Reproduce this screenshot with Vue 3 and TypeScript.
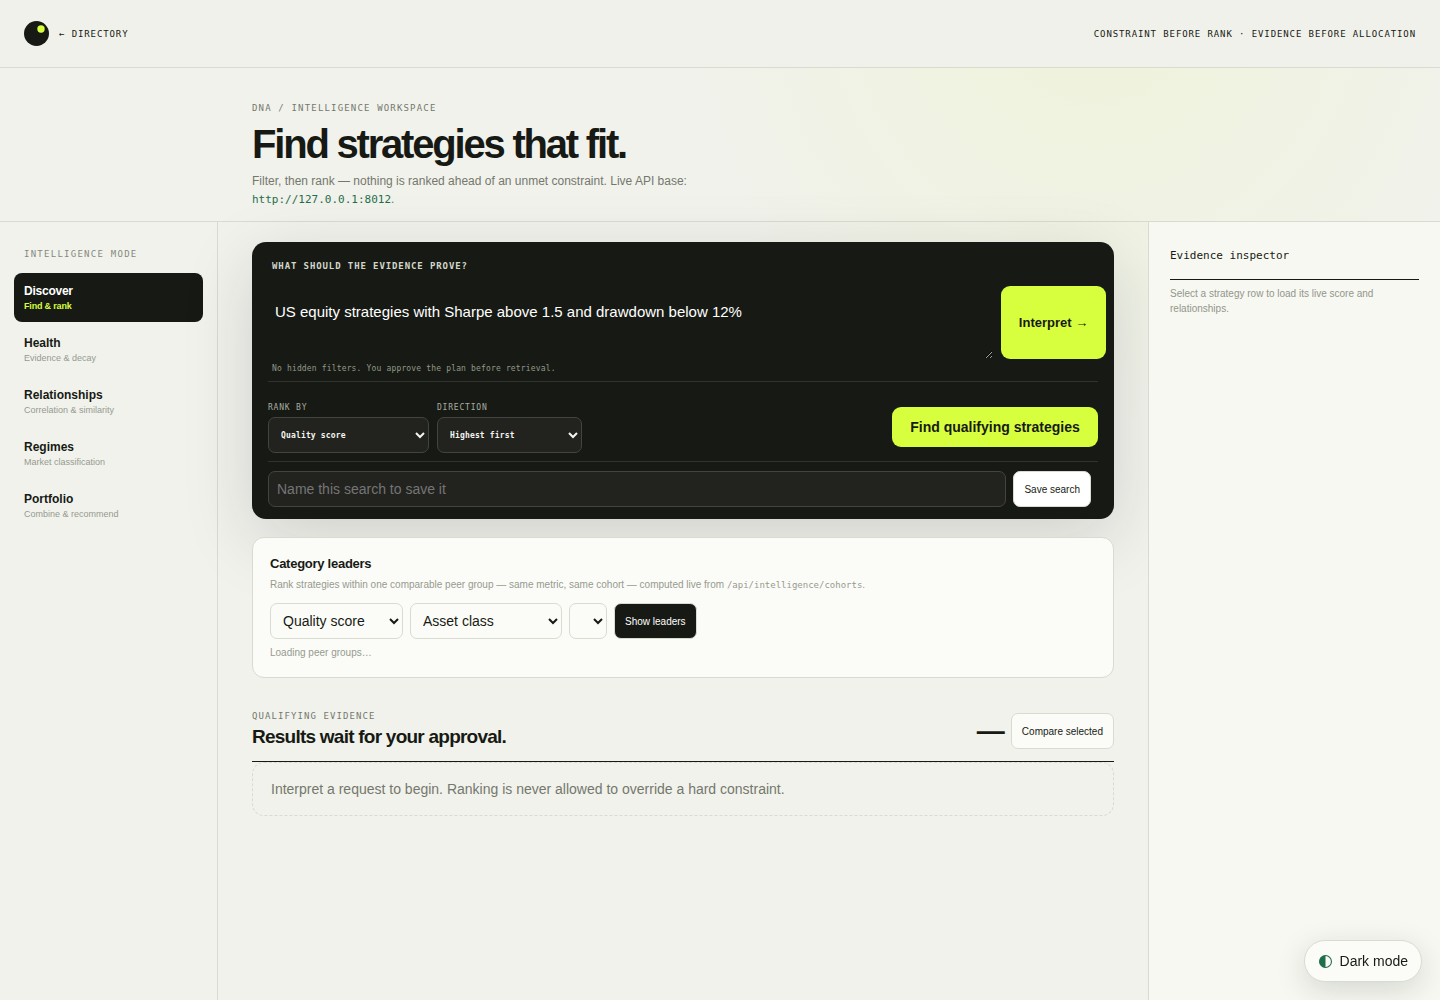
<script setup lang="ts">
import { ref } from 'vue'

interface Mode {
  id: string
  name: string
  detail: string
}

const modes: Mode[] = [
  { id: 'discover', name: 'Discover', detail: 'Find & rank' },
  { id: 'health', name: 'Health', detail: 'Evidence & decay' },
  { id: 'relationships', name: 'Relationships', detail: 'Correlation & similarity' },
  { id: 'regimes', name: 'Regimes', detail: 'Market classification' },
  { id: 'portfolio', name: 'Portfolio', detail: 'Combine & recommend' },
]

const activeMode = ref('discover')
const request = ref('US equity strategies with Sharpe above 1.5 and drawdown below 12%')
const searchName = ref('')
const apiBase = 'http://127.0.0.1:8012'
</script>

<template>
  <div class="page">
    <header class="topbar">
      <a class="brand" href="#directory">
        <svg class="logo" viewBox="0 0 25 25" aria-hidden="true">
          <circle cx="12.5" cy="12.5" r="12.5" fill="#171a14" />
          <circle cx="17" cy="8" r="3.7" fill="#d7ff3e" />
        </svg>
        <span>← DIRECTORY</span>
      </a>
      <span class="motto">CONSTRAINT BEFORE RANK · EVIDENCE BEFORE ALLOCATION</span>
    </header>

    <section class="hero">
      <p class="eyebrow">DNA / INTELLIGENCE WORKSPACE</p>
      <h1>Find strategies that fit.</h1>
      <p class="lede">
        Filter, then rank — nothing is ranked ahead of an unmet constraint. Live API base:
        <code>{{ apiBase }}</code>.
      </p>
    </section>

    <div class="workspace">
      <nav class="modes" aria-label="Intelligence mode">
        <p class="modes-title">INTELLIGENCE MODE</p>
        <button
          v-for="mode in modes"
          :key="mode.id"
          type="button"
          class="mode"
          :class="{ active: mode.id === activeMode }"
          @click="activeMode = mode.id"
        >
          <b>{{ mode.name }}</b>
          <small>{{ mode.detail }}</small>
        </button>
      </nav>

      <main class="main">
        <section class="console">
          <label class="ask" for="request">WHAT SHOULD THE EVIDENCE PROVE?</label>
          <div class="composer">
            <textarea id="request" v-model="request"></textarea>
            <button type="button" class="interpret">Interpret <span>→</span></button>
          </div>
          <p class="note">No hidden filters. You approve the plan before retrieval.</p>

          <div class="rank-row">
            <label class="field rank">
              <span>RANK BY</span>
              <select><option>Quality score</option></select>
            </label>
            <label class="field direction">
              <span>DIRECTION</span>
              <select><option>Highest first</option></select>
            </label>
            <button type="button" class="find">Find qualifying strategies</button>
          </div>

          <div class="save-row">
            <input v-model="searchName" type="text" placeholder="Name this search to save it" aria-label="Search name" />
            <button type="button" class="small-button save">Save search</button>
          </div>
        </section>

        <section class="leaders">
          <h2>Category leaders</h2>
          <p>
            Rank strategies within one comparable peer group — same metric, same cohort — computed live from
            <code>/api/intelligence/cohorts</code>.
          </p>
          <div class="leader-controls">
            <select class="metric" aria-label="Metric"><option>Quality score</option></select>
            <select class="cohort" aria-label="Cohort"><option>Asset class</option></select>
            <select class="peer" aria-label="Peer group"></select>
            <button type="button" class="small-button show">Show leaders</button>
          </div>
          <p>Loading peer groups…</p>
        </section>

        <section class="results">
          <div class="results-head">
            <div>
              <p class="results-eyebrow">QUALIFYING EVIDENCE</p>
              <h2>Results wait for your approval.</h2>
            </div>
            <div class="results-actions">
              <strong>—</strong>
              <button type="button" class="small-button compare">Compare selected</button>
            </div>
          </div>
          <p class="empty">Interpret a request to begin. Ranking is never allowed to override a hard constraint.</p>
        </section>
      </main>

      <aside class="inspector">
        <h2>Evidence inspector</h2>
        <p>Select a strategy row to load its live score and relationships.</p>
      </aside>
    </div>

    <button type="button" class="theme">
      <svg viewBox="0 0 12 12" aria-hidden="true">
        <circle cx="6" cy="6" r="5.5" fill="none" stroke="#1f6f4a" />
        <path d="M6 .5a5.5 5.5 0 0 0 0 11z" fill="#1f6f4a" />
      </svg>
      <span>Dark mode</span>
    </button>
  </div>
</template>

<style>
body {
  margin: 0;
  background: #f1f2ec;
}
</style>

<style scoped>
.page {
  --ink: #171a14;
  --line: #d8dbd0;
  --lime: #d7ff3e;
  --paper: #fbfcf7;
  --mono: "DejaVu Sans Mono", monospace;
  min-height: 100vh;
  display: flex;
  flex-direction: column;
  color: var(--ink);
  background: radial-gradient(circle at 76% 0, rgba(215, 255, 62, 0.1), transparent 430px), #f1f2ec;
  font-family: "Liberation Sans", Arial, sans-serif;
  font-size: 14px;
}

*,
*::before,
*::after {
  box-sizing: border-box;
}

h1,
h2,
p {
  margin: 0;
}

button,
input,
select,
textarea {
  font: inherit;
  margin: 0;
}

code {
  font-family: var(--mono);
}

.topbar {
  display: flex;
  align-items: center;
  justify-content: space-between;
  height: 68px;
  padding: 0 24px;
  border-bottom: 1px solid var(--line);
  background: #f0f1ea;
  font: 9px/14px var(--mono);
  letter-spacing: 0.1em;
}

.brand {
  display: flex;
  align-items: center;
  gap: 10px;
  color: inherit;
  text-decoration: none;
}

.logo {
  width: 25px;
  height: 25px;
}

.hero {
  padding: 33px 34px 12px 252px;
  border-bottom: 1px solid var(--line);
}

.eyebrow {
  color: #74786c;
  font: 9px/14px var(--mono);
  letter-spacing: 0.13em;
}

h1 {
  margin: 9px 0 8px;
  font-size: 40px;
  line-height: 40px;
  letter-spacing: -0.055em;
}

.lede {
  max-width: 520px;
  color: #74786c;
  font-size: 12px;
  line-height: 18px;
}

.lede code {
  color: #1f6f4a;
  font-size: 11px;
}

.workspace {
  flex: 1;
  display: grid;
  grid-template-columns: 218px minmax(0, 1fr) 292px;
}

.modes {
  padding: 25px 14px;
  border-right: 1px solid var(--line);
}

.modes-title {
  padding: 0 10px 12px;
  color: #85897d;
  font: 9px/14px var(--mono);
  letter-spacing: 0.14em;
}

.mode {
  display: block;
  width: 100%;
  height: 49px;
  margin-bottom: 3px;
  padding: 0 10px;
  border: 0;
  border-radius: 8px;
  background: none;
  color: var(--ink);
  text-align: left;
}

.mode b,
.mode small {
  display: block;
}

.mode b {
  font-size: 12px;
  line-height: 16px;
}

.mode small {
  color: #969a8f;
  font-size: 9px;
  line-height: 14px;
}

.mode.active {
  background: var(--ink);
  color: #fff;
}

.mode.active b,
.mode.active small {
  letter-spacing: -0.02em;
}

.mode.active small {
  color: var(--lime);
  font-weight: 700;
}

.main {
  padding: 20px 34px 40px;
}

.console {
  padding: 8px 8px 12px;
  border-radius: 14px;
  background: var(--ink);
  box-shadow: 0 20px 70px rgba(23, 26, 20, 0.15);
}

.ask {
  display: block;
  padding: 9px 12px 13px;
  color: #d3d7ca;
  font: 700 9px/14px var(--mono);
  letter-spacing: 0.1em;
}

.composer {
  display: flex;
  gap: 8px;
}

.composer textarea {
  flex: 1;
  min-width: 0;
  height: 73px;
  padding: 15px;
  border: 0;
  outline: 0;
  background: none;
  color: #fff;
  font-size: 15px;
  line-height: 22px;
  resize: vertical;
}

.interpret,
.find {
  border: 0;
  border-radius: 9px;
  background: var(--lime);
  color: var(--ink);
  font-weight: 700;
}

.interpret {
  width: 105px;
  font-size: 13px;
}

.interpret span {
  font-weight: 400;
}

.note {
  padding: 3px 12px 6px;
  color: #92988a;
  font: 8px/13px var(--mono);
  letter-spacing: 0.02em;
}

.rank-row {
  display: flex;
  gap: 8px;
  margin: 0 8px;
  padding: 19px 0 8px;
  border-top: 1px solid #30332d;
}

.field {
  color: #a8aca0;
  font: 8px/14px var(--mono);
  letter-spacing: 0.1em;
}

.field span,
.field select {
  display: block;
}

.field span {
  margin-bottom: 2px;
}

.field select {
  width: 100%;
  height: 36px;
  padding: 0 8px;
  border: 1px solid #42443f;
  border-radius: 7px;
  background: #22231f;
  color: #f4f5ef;
  font-weight: 700;
  letter-spacing: 0.02em;
}

.rank {
  width: 161px;
}

.direction {
  width: 145px;
}

.find {
  align-self: center;
  height: 40px;
  width: 206px;
  margin-left: auto;
  font-size: 14px;
}

.save-row {
  display: flex;
  gap: 7px;
  margin: 0 8px;
  padding: 9px 7px 0 0;
  border-top: 1px solid #30332d;
}

.save-row input {
  flex: 1;
  min-width: 0;
  height: 36px;
  padding: 0 8px;
  border: 1px solid #42443f;
  border-radius: 7px;
  background: #22231f;
  color: #fff;
}

.save-row input::placeholder {
  color: #757575;
}

.small-button {
  height: 36px;
  padding: 0 10px;
  border: 1px solid var(--line);
  border-radius: 7px;
  background: var(--paper);
  color: var(--ink);
  font-size: 10px;
}

.save {
  background: #fff;
}

.leaders {
  margin-top: 18px;
  padding: 17px;
  border: 1px solid var(--line);
  border-radius: 12px;
  background: var(--paper);
}

.leaders h2 {
  font-size: 13px;
  line-height: 17px;
  letter-spacing: -0.02em;
}

.leaders p {
  margin-top: 5px;
  color: #969a8f;
  font-size: 10px;
  line-height: 15px;
}

.leaders code {
  font-size: 9px;
}

.leader-controls {
  display: flex;
  gap: 7px;
  margin: 10px 0 6px;
}

.leader-controls select {
  height: 36px;
  padding: 0 8px;
  border: 1px solid var(--line);
  border-radius: 7px;
  background: var(--paper);
  color: var(--ink);
}

.metric {
  width: 133px;
}

.cohort {
  width: 152px;
}

.peer {
  width: 38px;
}

.show {
  background: var(--ink);
  color: #fff;
}

.results {
  margin-top: 31px;
}

.results-head {
  display: flex;
  align-items: flex-end;
  justify-content: space-between;
  padding-bottom: 12px;
  border-bottom: 1px solid var(--ink);
}

.results-eyebrow {
  color: #74786c;
  font: 9px/14px var(--mono);
  letter-spacing: 0.12em;
}

.results h2 {
  margin-top: 2px;
  font-size: 19px;
  line-height: 24px;
  letter-spacing: -0.04em;
}

.results-actions {
  display: flex;
  align-items: center;
  gap: 6px;
}

.results-actions strong {
  font-size: 28px;
  line-height: 32px;
}

.empty {
  padding: 18px;
  border: 1px dashed var(--line);
  border-radius: 12px;
  color: #74786c;
  font-size: 14px;
  line-height: 16px;
}

.inspector {
  padding: 25px 21px;
  border-left: 1px solid var(--line);
  background: #f7f8f2;
}

.inspector h2 {
  padding-bottom: 14px;
  border-bottom: 1px solid var(--ink);
  font: 11px/18px var(--mono);
}

.inspector p {
  margin-top: 6px;
  color: #92968a;
  font-size: 10px;
  line-height: 15px;
}

.theme {
  position: fixed;
  right: 18px;
  bottom: 18px;
  display: flex;
  align-items: center;
  gap: 8px;
  height: 42px;
  padding: 0 13px 0 14px;
  border: 1px solid var(--line);
  border-radius: 21px;
  background: var(--paper);
  color: var(--ink);
  box-shadow: 0 8px 30px rgba(23, 26, 20, 0.15);
}

.theme svg {
  width: 13px;
  height: 13px;
}
</style>
